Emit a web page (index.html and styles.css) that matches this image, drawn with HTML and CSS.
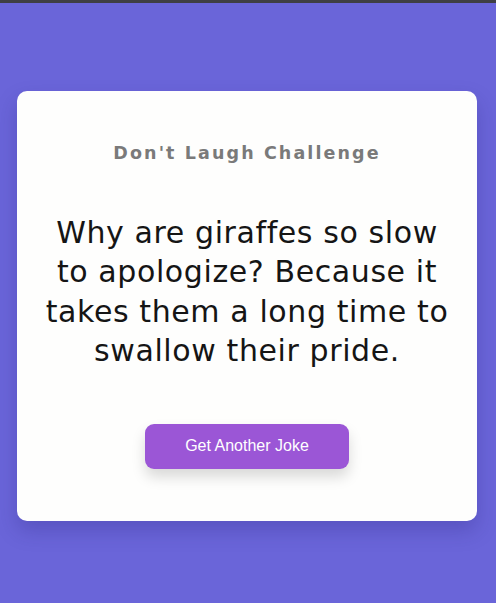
FILE: index.html
```html
<!DOCTYPE html>
<html>
<head>
<meta charset="utf-8">
<link rel="stylesheet" href="styles.css">
</head>
<body>
<div class="topbar"></div>
<main class="stage">
  <section class="card">
    <h1 class="title">Don't Laugh Challenge</h1>
    <p class="joke">Why are giraffes so slow to apologize? Because it takes them a long time to swallow their pride.</p>
    <button class="btn">Get Another Joke</button>
  </section>
</main>
</body>
</html>
```
FILE: styles.css
```css
* { box-sizing: border-box; }
html, body { margin: 0; padding: 0; }
body {
  background: #6a65d9;
  min-height: 603px;
  display: flex;
  flex-direction: column;
  font-family: "DejaVu Sans", sans-serif;
}
.topbar {
  height: 3px;
  background: #3f3f44;
}
.stage {
  flex: 1;
  display: flex;
  align-items: center;
  justify-content: center;
  padding: 5px 19px 0 17px;
}
.card {
  width: 100%;
  background: #fefefd;
  border-radius: 10px;
  padding: 50px 21px 52px;
  text-align: center;
  box-shadow: 0 10px 20px rgba(40, 30, 120, 0.25);
  display: flex;
  flex-direction: column;
  align-items: center;
}
.title {
  margin: 0;
  font-size: 17.5px;
  line-height: 24px;
  font-weight: bold;
  letter-spacing: 2.1px;
  color: #7a7a7a;
}
.joke {
  margin: 48px 0 53px;
  font-size: 30px;
  line-height: 39.5px;
  font-weight: normal;
  letter-spacing: 0.6px;
  color: #151515;
}
.btn {
  width: 204px;
  height: 45px;
  border: none;
  border-radius: 9px;
  background: #9b56d6;
  color: #fff;
  font-family: "Liberation Sans", Arial, sans-serif;
  font-size: 16px;
  box-shadow: 0 8px 14px rgba(0, 0, 0, 0.15);
}
```
